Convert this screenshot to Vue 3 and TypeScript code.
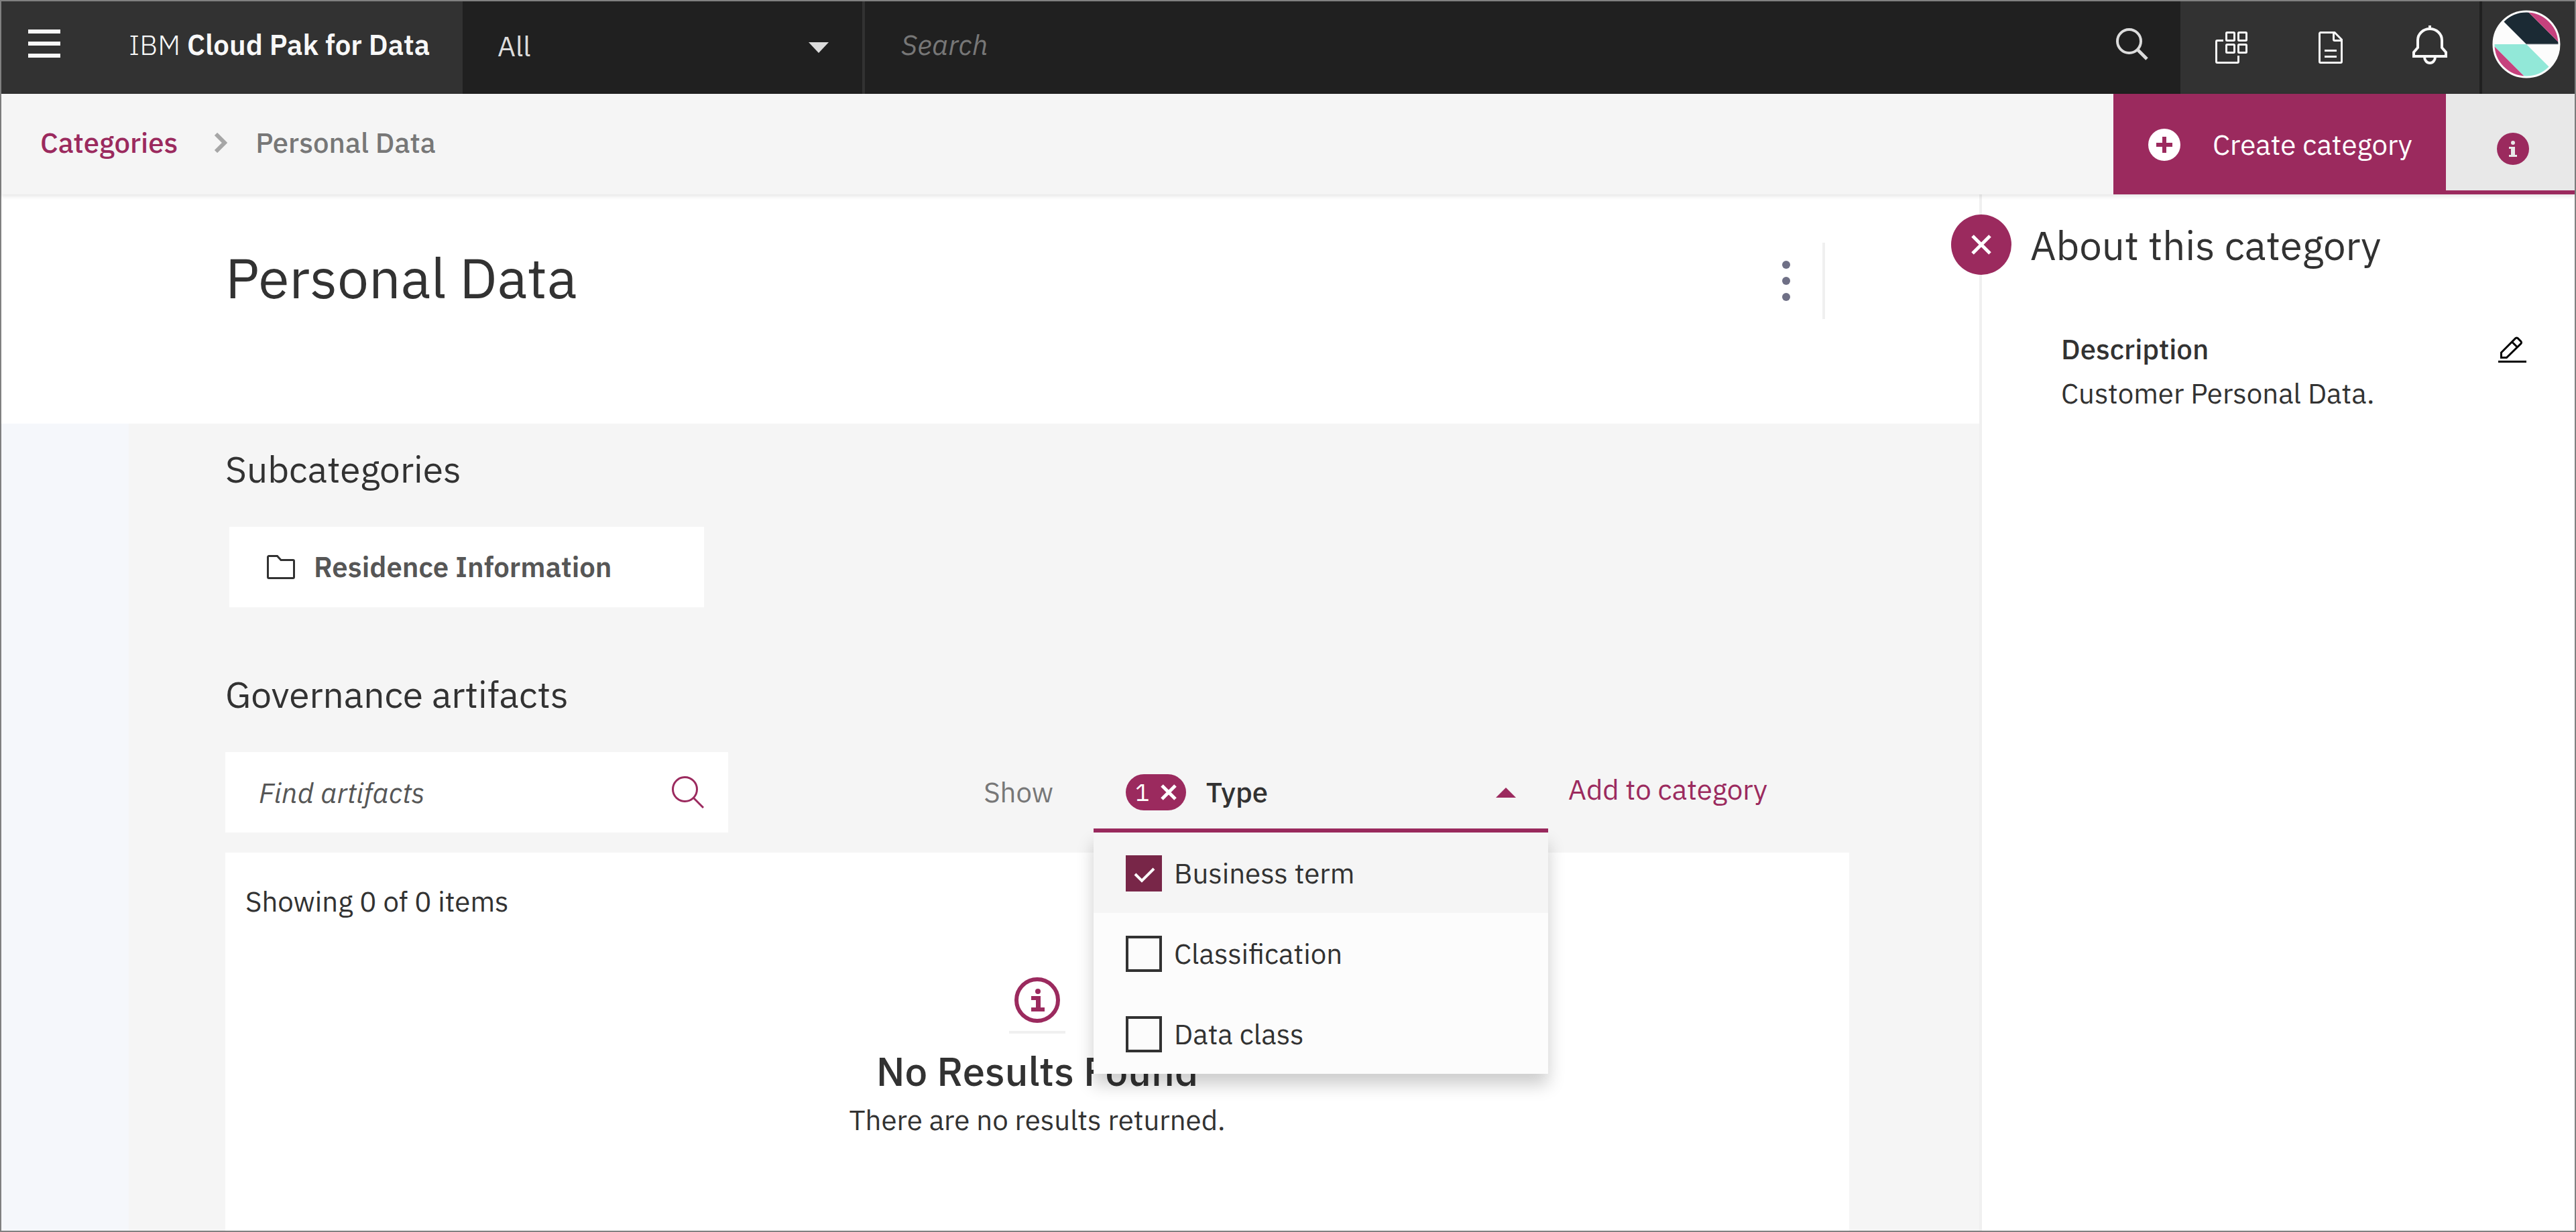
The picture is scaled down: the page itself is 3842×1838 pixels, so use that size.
<script setup lang="ts">
import { computed, ref } from 'vue'

interface ArtifactType {
  id: string
  label: string
}

const artifactTypes: ArtifactType[] = [
  { id: 'business-term', label: 'Business term' },
  { id: 'classification', label: 'Classification' },
  { id: 'data-class', label: 'Data class' },
]

const scope = ref('All')
const query = ref('')
const artifactQuery = ref('')
const selected = ref<string[]>(['business-term'])
const menuOpen = ref(true)
const highlighted = ref('business-term')
const panelOpen = ref(true)

const selectedCount = computed(() => selected.value.length)
</script>

<template>
  <div class="app">
    <header class="topbar">
      <button class="menu-button" type="button" aria-label="Open navigation">
        <svg viewBox="0 0 48 42" width="48" height="42" fill="#f8f8f8">
          <path d="M0 0h48v6H0zM0 18h48v6H0zM0 36h48v6H0z" />
        </svg>
      </button>
      <a class="brand" href="#">IBM <strong>Cloud Pak for Data</strong></a>
      <div class="scope">
        <select v-model="scope" aria-label="Search scope">
          <option>All</option>
        </select>
        <svg class="scope-caret" viewBox="0 0 30 16" width="30" height="16" fill="#dcdcdc">
          <path d="M0 0h30L15 16z" />
        </svg>
      </div>
      <form class="search" role="search" @submit.prevent>
        <input v-model="query" type="search" placeholder="Search" aria-label="Search" />
        <button type="submit" aria-label="Run search">
          <svg viewBox="0 0 48 48" width="48" height="48" fill="none" stroke="#dcdcdc" stroke-width="4">
            <circle cx="19.500" cy="19.500" r="17.500" />
            <path d="M32 32l14 14" stroke-width="5" />
          </svg>
        </button>
      </form>
      <nav class="tools" aria-label="Tools">
        <button type="button" aria-label="Services">
          <svg viewBox="0 0 48 48" width="48" height="48" fill="none" stroke="#f8f8f8" stroke-width="3">
            <rect x="16.500" y="1.500" width="12" height="12" rx="1" />
            <rect x="34.500" y="1.500" width="12" height="12" rx="1" />
            <rect x="16.500" y="19.500" width="12" height="12" rx="1" />
            <rect x="34.500" y="19.500" width="12" height="12" rx="1" />
            <path d="M12 13.500H3a1.500 1.500 0 0 0-1.500 1.500v30A1.500 1.500 0 0 0 3 46.500h30a1.500 1.500 0 0 0 1.500-1.500v-9" />
          </svg>
        </button>
        <button type="button" aria-label="Documentation">
          <svg viewBox="0 0 36 48" width="36" height="48" fill="none" stroke="#f8f8f8" stroke-width="3">
            <path d="M24 1.500H3A1.500 1.500 0 0 0 1.500 3v42A1.500 1.500 0 0 0 3 46.500h30a1.500 1.500 0 0 0 1.500-1.500V12zM22.500 1.500V12a1.500 1.500 0 0 0 1.500 1.500h10.500M9 28.500h18M9 37.500h18" />
          </svg>
        </button>
        <button type="button" class="raised" aria-label="Notifications">
          <svg viewBox="0 0 52 58" width="52" height="58" fill="none" stroke="#f8f8f8" stroke-width="4">
            <path d="M26 0v6M2 46v-6l6-7V22a18 17 0 0 1 36 0v11l6 7v6zM18 47a8 9 0 0 0 16 0" />
          </svg>
        </button>
      </nav>
      <button class="account" type="button" aria-label="Account">
        <svg viewBox="0 0 102 102" width="102" height="102">
          <clipPath id="avatar-clip"><circle cx="51" cy="51" r="49" /></clipPath>
          <g clip-path="url(#avatar-clip)">
            <path d="M0 0h102v102H0z" fill="#fcfcfc" />
            <path d="M14 14L51 51h51L51 0H0z" fill="#1b2a34" />
            <path d="M51 0l51 51V0z" fill="#c6417d" />
            <path d="M0 51h51l36 36 15 15H51z" fill="#92e8d8" />
            <path d="M0 51l51 51H0z" fill="#c6417d" />
            <path d="M51 51h51" stroke="#b9bcbf" stroke-width="1" />
          </g>
          <circle cx="51" cy="51" r="49" fill="none" stroke="#fcfcfc" stroke-width="3" />
        </svg>
      </button>
    </header>

    <div class="crumbbar">
      <nav class="crumbs" aria-label="Breadcrumb">
        <a href="#">Categories</a>
        <svg viewBox="0 0 20 30" width="20" height="30" fill="none" stroke="#a6a6a6" stroke-width="6">
          <path d="M3 2l13 13L3 28" />
        </svg>
        <span>Personal Data</span>
      </nav>
      <button class="create" type="button">
        <svg viewBox="0 0 48 48" width="48" height="48">
          <circle cx="24" cy="24" r="24" fill="#fff" />
          <path d="M24 12v24M12 24h24" stroke="#9b2a5e" stroke-width="6" />
        </svg>
        <span>Create category</span>
      </button>
      <button class="info-toggle" type="button" aria-label="About this category" @click="panelOpen = !panelOpen">
        <svg viewBox="0 0 48 48" width="48" height="48">
          <circle cx="24" cy="24" r="24" fill="#9b2a5e" />
          <circle cx="24" cy="15" r="3" fill="#e8e8e8" />
          <path d="M18 21h9v12h3v3H18v-3h3v-9h-3z" fill="#e8e8e8" />
        </svg>
      </button>
    </div>

    <div class="workspace">
      <main class="main">
        <div class="title-row">
          <h1>Personal Data</h1>
          <button class="overflow" type="button" aria-label="More actions">
            <svg viewBox="0 0 12 60" width="12" height="60" fill="#6f7086">
              <circle cx="6" cy="6" r="6" />
              <circle cx="6" cy="30" r="6" />
              <circle cx="6" cy="54" r="6" />
            </svg>
          </button>
        </div>

        <div class="content">
          <div class="rail"></div>
          <div class="sections">
            <section>
              <h2>Subcategories</h2>
              <ul class="cards">
                <li>
                  <a class="card" href="#">
                    <svg viewBox="0 0 42 36" width="42" height="36" fill="none" stroke="#323232" stroke-width="3">
                      <path d="M3 1.500h12.500l5.500 6h18a1.500 1.500 0 0 1 1.500 1.500v24a1.500 1.500 0 0 1-1.500 1.500H3A1.500 1.500 0 0 1 1.500 33V3A1.500 1.500 0 0 1 3 1.500z" />
                    </svg>
                    <span>Residence Information</span>
                  </a>
                </li>
              </ul>
            </section>

            <section class="artifacts">
              <h2>Governance artifacts</h2>
              <div class="toolbar">
                <div class="finder">
                  <input v-model="artifactQuery" type="search" placeholder="Find artifacts" aria-label="Find artifacts" />
                  <svg viewBox="0 0 48 48" width="48" height="48" fill="none" stroke="#9b2a5e" stroke-width="3">
                    <circle cx="19.500" cy="19.500" r="18" />
                    <path d="M32.500 32.500L47 47" />
                  </svg>
                </div>
                <span id="show-label" class="show-label">Show</span>
                <div class="filter">
                  <div class="filter-trigger">
                    <button v-if="selectedCount" class="pill" type="button" aria-label="Clear selection" @click="selected = []">
                      <span>{{ selectedCount }}</span>
                      <svg viewBox="0 0 24 24" width="24" height="24" fill="none" stroke="#fff" stroke-width="5">
                        <path d="M2 2l20 20M22 2L2 22" />
                      </svg>
                    </button>
                    <button
                      class="filter-toggle"
                      type="button"
                      :aria-expanded="menuOpen"
                      aria-describedby="show-label"
                      @click="menuOpen = !menuOpen"
                    >
                      <span>Type</span>
                      <svg viewBox="0 0 30 15" width="30" height="15" fill="#9b2a5e">
                        <path d="M0 15h30L15 0z" />
                      </svg>
                    </button>
                  </div>
                  <ul v-if="menuOpen" class="menu">
                    <li
                      v-for="type in artifactTypes"
                      :key="type.id"
                      :class="{ active: highlighted === type.id }"
                      @mouseenter="highlighted = type.id"
                    >
                      <label>
                        <span class="tick">
                          <input v-model="selected" type="checkbox" :value="type.id" />
                          <svg viewBox="0 0 54 54" width="54" height="54" fill="none" stroke="#fff" stroke-width="4">
                            <path d="M14 28l10 10 18-18" />
                          </svg>
                        </span>
                        <span>{{ type.label }}</span>
                      </label>
                    </li>
                  </ul>
                </div>
                <button class="add" type="button">Add to category</button>
              </div>

              <div class="results">
                <p class="count">Showing 0 of 0 items</p>
                <div class="empty">
                  <svg viewBox="0 0 68 68" width="68" height="68" fill="#9b2a5e">
                    <circle cx="34" cy="34" r="31" fill="none" stroke="#9b2a5e" stroke-width="6" />
                    <circle cx="35" cy="21" r="4" />
                    <path d="M25 28h14v17h6v6H25v-6h7V34h-7z" />
                  </svg>
                  <h3>No Results Found</h3>
                  <p>There are no results returned.</p>
                </div>
              </div>
            </section>
          </div>
        </div>
      </main>

      <aside v-if="panelOpen" class="about">
        <button class="close" type="button" aria-label="Close panel" @click="panelOpen = false">
          <svg viewBox="0 0 30 30" width="30" height="30" fill="none" stroke="#fff" stroke-width="5">
            <path d="M2 2l26 26M28 2L2 28" />
          </svg>
        </button>
        <h2>About this category</h2>
        <div class="about-body">
          <div class="about-head">
            <h3>Description</h3>
            <button type="button" aria-label="Edit description">
              <svg viewBox="0 0 42 39" width="42" height="39" fill="none" stroke="#000" stroke-width="3">
                <path d="M4.500 31.500V24L26 2.500q1.500-1 3 0l5 5q1 1.500 0 3L12.500 31.500zM20.500 8l8 8" />
                <path d="M0 37.500h42" />
              </svg>
            </button>
          </div>
          <p>Customer Personal Data.</p>
        </div>
      </aside>
    </div>
  </div>
</template>

<style>
body {
  margin: 0;
}
</style>

<style scoped>
.app {
  --accent: #9b2a5e;
  --ink: #323232;
  --surface: #f5f5f5;
  display: flex;
  flex-direction: column;
  min-height: 100vh;
  border: 2px solid #808080;
  background: #fff;
  color: var(--ink);
  font-family: "IBM Plex Sans", Roboto, sans-serif;
  font-size: 42px;
  line-height: 54px;
}

.app,
.app * {
  box-sizing: border-box;
}

button,
input,
select {
  margin: 0;
  padding: 0;
  border: 0;
  border-radius: 0;
  outline: 0;
  background: none;
  color: inherit;
  font: inherit;
  appearance: none;
}

input[type="search"]::-webkit-search-cancel-button {
  appearance: none;
}

button {
  cursor: pointer;
}

a {
  color: inherit;
  text-decoration: none;
}

h1,
h2,
h3,
p,
ul {
  margin: 0;
  padding: 0;
  font-size: inherit;
  font-weight: 400;
  list-style: none;
}

svg {
  display: block;
  flex: none;
}

.topbar {
  display: flex;
  height: 138px;
  background: #323232;
  color: #f8f8f8;
}

.menu-button {
  padding: 0 52px 12px 40px;
}

.brand {
  display: flex;
  align-items: center;
  gap: 10px;
  width: 548px;
  padding: 0 0 8px 50px;
  font-weight: 300;
  white-space: nowrap;
}

.brand strong {
  font-weight: 600;
}

.scope {
  display: grid;
  align-items: center;
  width: 600px;
  border-right: 4px solid #323232;
  background: #202020;
}

.scope select {
  grid-area: 1 / 1;
  height: 100%;
  padding: 0 52px 4px;
  color: #dcdcdc;
}

.scope-caret {
  grid-area: 1 / 1;
  justify-self: end;
  margin-right: 50px;
  pointer-events: none;
}

.search {
  display: flex;
  flex: 1;
  background: #202020;
}

.search input {
  flex: 1;
  min-width: 0;
  padding: 0 54px 8px;
}

.search input::placeholder {
  color: #777;
  font-style: italic;
  opacity: 1;
}

.search button {
  padding: 0 48px 10px;
}

.tools {
  display: flex;
  padding-left: 2px;
}

.tools button {
  display: grid;
  place-items: center;
  width: 148px;
}

.tools .raised {
  padding-bottom: 8px;
}

.account {
  display: grid;
  place-items: center;
  width: 142px;
  padding: 0 6px 10px 0;
  border-left: 4px solid #202020;
}

.crumbbar {
  position: relative;
  z-index: 1;
  display: flex;
  height: 150px;
  background: var(--surface);
  box-shadow: 0 3px 6px rgba(0, 0, 0, 0.1);
}

.crumbs {
  display: flex;
  flex: 1;
  align-items: center;
  gap: 54px;
  padding: 0 58px 4px;
  color: #777;
  font-weight: 500;
}

.crumbs a {
  color: var(--accent);
}

.crumbs svg {
  margin-right: -12px;
}

.create {
  display: flex;
  align-items: center;
  gap: 48px;
  width: 496px;
  padding: 2px 0 0 52px;
  background: var(--accent);
  color: #fff;
  white-space: nowrap;
}

.info-toggle {
  display: grid;
  place-items: center;
  width: 192px;
  padding: 20px 0 0 8px;
  border-bottom: 6px solid var(--accent);
  background: #e8e8e8;
}

.workspace {
  display: flex;
  flex: 1;
}

.main {
  display: flex;
  flex: 1;
  flex-direction: column;
  min-width: 0;
}

.title-row {
  display: flex;
  align-items: flex-start;
  justify-content: space-between;
  padding: 72px 230px 156px 334px;
}

h1 {
  font-size: 84px;
  line-height: 104px;
}

.overflow {
  height: 114px;
  padding-right: 48px;
  border-right: 4px solid #f0f0f0;
}

.content {
  display: flex;
  flex: 1;
  background: var(--surface);
}

.rail {
  flex: none;
  width: 190px;
  background: #f5f7fb;
}

.sections {
  display: flex;
  flex: 1;
  flex-direction: column;
  gap: 98px;
  min-width: 0;
  padding: 36px 194px 0 144px;
}

.sections h2 {
  margin-bottom: 54px;
  font-size: 55px;
  line-height: 64px;
}

.cards {
  display: flex;
  padding-left: 6px;
}

.card {
  display: flex;
  align-items: center;
  gap: 28px;
  width: 708px;
  height: 120px;
  padding-left: 56px;
  background: #fff;
  color: #565656;
  font-weight: 600;
}

.artifacts {
  display: flex;
  flex: 1;
  flex-direction: column;
}

.toolbar {
  display: flex;
  align-items: center;
  height: 120px;
  margin-bottom: 30px;
  padding-right: 120px;
}

.finder {
  display: flex;
  align-items: center;
  width: 750px;
  height: 120px;
  padding: 0 36px 0 50px;
  background: #fff;
}

.finder input {
  flex: 1;
  min-width: 0;
  height: 100%;
}

.finder input::placeholder {
  color: #565656;
  font-style: italic;
  opacity: 1;
}

.show-label {
  margin: 0 60px 0 auto;
  color: #777;
}

.filter {
  position: relative;
  width: 678px;
  margin-right: 30px;
}

.filter-trigger {
  display: flex;
  align-items: center;
  height: 120px;
  padding: 6px 0 0 48px;
  border-bottom: 6px solid var(--accent);
}

.pill {
  display: flex;
  align-items: center;
  gap: 16px;
  height: 54px;
  margin-right: 30px;
  padding: 0 14px;
  border-radius: 27px;
  background: var(--accent);
  color: #fff;
  font-size: 36px;
}

.filter-toggle {
  display: flex;
  flex: 1;
  align-items: center;
  justify-content: space-between;
  height: 100%;
  padding-right: 48px;
  font-weight: 500;
}

.menu {
  position: absolute;
  z-index: 2;
  top: 100%;
  left: 0;
  width: 100%;
  background: #fcfcfc;
  box-shadow: 0 16px 24px rgba(0, 0, 0, 0.2);
}

.menu .active {
  background: var(--surface);
}

.menu label {
  display: flex;
  align-items: center;
  gap: 18px;
  height: 120px;
  padding: 2px 0 0 48px;
}

.tick {
  display: grid;
}

.tick input {
  grid-area: 1 / 1;
  width: 54px;
  height: 54px;
  border: 4px solid var(--ink);
}

.tick svg {
  grid-area: 1 / 1;
  visibility: hidden;
  pointer-events: none;
}

.tick input:checked {
  border-color: #782648;
  background: #782648;
}

.tick input:checked + svg {
  visibility: visible;
}

.add {
  padding: 0 2px 8px 0;
  color: var(--accent);
}

.results {
  flex: 1;
  padding: 46px 30px;
  background: #fff;
}

.empty {
  display: flex;
  flex-direction: column;
  align-items: center;
  padding-top: 86px;
}

.empty svg {
  box-sizing: content-box;
  padding: 0 8px 12px;
  border-bottom: 4px solid #f0f0f0;
}

.empty h3 {
  margin: 20px 0 10px;
  font-size: 60px;
  font-weight: 500;
  line-height: 72px;
}

.about {
  position: relative;
  width: 888px;
  padding-top: 40px;
  border-left: 4px solid #f0f0f0;
}

.about h2 {
  padding-left: 72px;
  font-size: 60px;
  line-height: 72px;
}

.close {
  position: absolute;
  top: 30px;
  left: -46px;
  display: grid;
  place-items: center;
  width: 90px;
  height: 90px;
  border-radius: 50%;
  background: var(--accent);
}

.about-body {
  padding: 86px 72px 0 118px;
  line-height: 66px;
}

.about-head {
  display: flex;
  align-items: center;
  justify-content: space-between;
}

.about-head h3 {
  font-weight: 500;
}
</style>
